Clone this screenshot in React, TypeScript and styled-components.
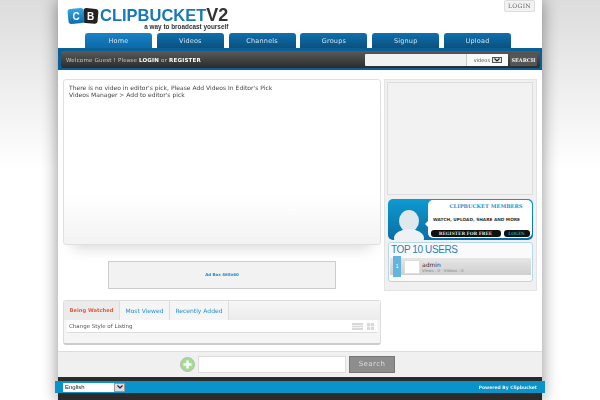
import styled, { createGlobalStyle } from "styled-components";

const GlobalStyle = createGlobalStyle`
  html, body {
    margin: 0;
    padding: 0;
    height: 400px;
    overflow: hidden;
    background: linear-gradient(180deg, #dcdcdc 0, #ffffff 170px);
  }
  * { box-sizing: border-box; }
`;

const Shell = styled.div`
  position: relative;
  width: 484px;
  height: 400px;
  margin: 0 auto;
  background: #fff;
  box-shadow: 0 0 16px rgba(0, 0, 0, 0.45);
  font-family: "DejaVu Sans", sans-serif;
  display: flex;
  flex-direction: column;
  opacity: 0.999;
`;

const Header = styled.div`
  height: 33px;
  padding: 7px 7px 0 9px;
  display: flex;
  justify-content: space-between;
  align-items: flex-start;
`;

const Logo = styled.div`
  display: flex;
`;

const LogoText = styled.div`
  display: flex;
  flex-direction: column;
  align-items: flex-end;
`;

const LogoTitle = styled.div`
  font-family: "Liberation Sans", sans-serif;
  font-weight: 700;
  font-size: 16.5px;
  line-height: 16px;
  color: #1878b8;
  white-space: nowrap;
`;

const LogoVersion = styled.span`
  color: #333;
  font-size: 18px;
`;

const LogoTag = styled.div`
  font-family: "Liberation Sans", sans-serif;
  font-weight: 700;
  font-size: 6.4px;
  line-height: 7px;
  color: #333;
`;

const LoginButton = styled.div`
  margin-top: -7px;
  width: 31px;
  height: 12px;
  border: 1px solid #ddd;
  border-radius: 2px;
  background: #f2f2f2;
  color: #666;
  font-family: "DejaVu Serif", serif;
  font-size: 6px;
  line-height: 10px;
  text-align: center;
  letter-spacing: 0.3px;
`;

const Tabs = styled.div`
  height: 15px;
  padding-left: 27px;
  display: flex;
  gap: 4.8px;
`;

const Tab = styled.div<{ $active?: boolean }>`
  width: 67px;
  border-radius: 3px 3px 0 0;
  background: linear-gradient(180deg, ${(p) => (p.$active ? "#1a82c4, #0c6aa8" : "#0f6fae, #0b517f")});
  color: #cfe3ef;
  font-size: 6.5px;
  line-height: 16px;
  text-align: center;
  letter-spacing: 0.2px;
`;

const NavBar = styled.div`
  height: 22px;
  background: #0b5f97;
  padding: 3px 2px 2px 3px;
`;

const NavInner = styled.div`
  height: 17px;
  border-radius: 2px;
  background: linear-gradient(180deg, #5a5a5a, #2b2b2b);
  display: flex;
  align-items: center;
  padding: 0 3px 0 5px;
  justify-content: space-between;
`;

const Welcome = styled.div`
  font-size: 5.5px;
  color: #c8c8c8;
  letter-spacing: 0.2px;
  white-space: nowrap;

  b {
    color: #fff;
  }
`;

const SearchGroup = styled.div`
  display: flex;
  align-items: center;
  gap: 2px;
`;

const SearchField = styled.div`
  width: 143px;
  height: 12px;
  background: #f2f2f2;
  border-radius: 1px;
  display: flex;
  justify-content: flex-end;
  align-items: center;
`;

const FieldType = styled.div`
  width: 42px;
  height: 12px;
  border-left: 1px solid #ccc;
  background: #fafafa;
  display: flex;
  align-items: center;
  justify-content: flex-end;
  gap: 2px;
  padding-right: 6px;
  font-size: 5px;
  color: #555;
`;

const SelectArrow = styled.div`
  width: 10px;
  height: 6px;
  border: 1px solid #555;
  background: #e6e6e6;
  display: flex;
  align-items: center;
  justify-content: center;
`;

const NavSearchButton = styled.div`
  width: 27px;
  height: 12px;
  background: #555;
  color: #eee;
  border-radius: 1px;
  font-family: "DejaVu Serif", serif;
  font-weight: 700;
  font-size: 5px;
  line-height: 12px;
  text-align: center;
`;

const Main = styled.div`
  height: 281px;
  padding: 9px 5px 0;
  display: flex;
  gap: 3px;
`;

const LeftColumn = styled.div`
  width: 318px;
  display: flex;
  flex-direction: column;
  align-items: center;
`;

const EditorPick = styled.div`
  width: 100%;
  height: 166px;
  padding: 4px 5px;
  border: 1px solid #e0e0e0;
  border-radius: 3px;
  background: linear-gradient(180deg, #fff 70%, #f3f3f3);
  box-shadow: 0 12px 14px -10px rgba(0, 0, 0, 0.18);
  color: #444;
  font-size: 6px;
  line-height: 7px;
  letter-spacing: 0.02px;
`;

const AdBox = styled.div`
  width: 228px;
  height: 28px;
  margin-top: 16px;
  border: 1px solid #ccc;
  background: #f2f2f2;
  color: #2a86c4;
  font-size: 4px;
  font-weight: 700;
  line-height: 26px;
  text-align: center;
`;

const ListPanel = styled.div`
  width: 100%;
  height: 45px;
  margin-top: 11px;
  border: 1px solid #ddd;
  border-bottom: 2px solid #ccc;
  border-radius: 3px;
  background: #f5f5f5;
`;

const ListTabs = styled.div`
  height: 19px;
  display: flex;
  background: linear-gradient(180deg, #f6f6f6, #ececec);
`;

const ListTab = styled.div<{ $active?: boolean }>`
  padding: 0 5.5px;
  border-right: 1px solid #ddd;
  background: ${(p) => (p.$active ? "#ebebeb" : "#f5f5f5")};
  color: ${(p) => (p.$active ? "#d9603b" : "#2a8fd0")};
  font-size: ${(p) => (p.$active ? "5.2px" : "6px")};
  font-weight: ${(p) => (p.$active ? 700 : 400)};
  line-height: 19px;
`;

const ListStyleRow = styled.div`
  margin: 0 3px;
  height: 13px;
  background: #fff;
  border-bottom: 1px solid #ddd;
  padding: 0 3px 0 2px;
  display: flex;
  align-items: center;
  justify-content: space-between;
  font-size: 5.5px;
  color: #555;
`;

const ListIcons = styled.div`
  display: flex;
  gap: 4px;
  align-items: center;
`;

const RightColumn = styled.div`
  width: 153px;
  height: 212px;
  background: #f0f0f0;
  border: 1px solid #e4e4e4;
  padding: 2px 3px 0 2px;
  display: flex;
  flex-direction: column;
`;

const AdSlot = styled.div`
  height: 113px;
  border: 1px solid #ddd;
  background: #f2f2f2;
`;

const Members = styled.div`
  margin-top: 4px;
  margin-left: 1px;
  height: 41px;
  border-radius: 5px;
  background: linear-gradient(180deg, #0d9ad0, #0a6ea6);
  padding: 1px 1px 2px 13px;
  display: flex;
  position: relative;
  overflow: hidden;
`;

const MembersCard = styled.div`
  position: relative;
  margin-left: 27px;
  flex: 1;
  border-radius: 5px;
  background: #fff;
  display: flex;
  flex-direction: column;
  align-items: center;
  padding-top: 3px;

  &::before {
    content: "";
    position: absolute;
    left: -3px;
    top: 21px;
    border-style: solid;
    border-width: 3px 3px 3px 0;
    border-color: transparent #fff transparent transparent;
  }
`;

const MembersTitle = styled.div`
  padding-left: 12px;
  color: #1a93cf;
  font-family: "DejaVu Serif", serif;
  font-weight: 700;
  font-size: 5.2px;
  line-height: 7px;
`;

const MembersText = styled.div`
  margin-top: 7px;
  width: 100%;
  padding-left: 5px;
  color: #333;
  font-weight: 700;
  font-size: 4.3px;
  line-height: 6px;
  white-space: nowrap;
`;

const MembersActions = styled.div`
  margin-top: 7px;
  display: flex;
  gap: 3px;
`;

const MembersButton = styled.div<{ $accent?: boolean }>`
  height: 7px;
  width: ${(p) => (p.$accent ? "26px" : "70px")};
  border-radius: 3px;
  background: #111;
  color: ${(p) => (p.$accent ? "#1a93cf" : "#ddd")};
  font-family: "DejaVu Serif", serif;
  font-weight: 700;
  font-size: 4.4px;
  line-height: 7px;
  text-align: center;
  white-space: nowrap;
`;

const Avatar = styled.svg`
  position: absolute;
  left: 4px;
  bottom: 0;
`;

const TopUsers = styled.div`
  margin-top: 2px;
  margin-left: 1px;
  height: 40px;
  border: 1px solid #b5d8ec;
  border-radius: 3px;
  background: #fafafa;
  padding: 1px;
`;

const TopTitle = styled.div`
  padding-left: 1px;
  color: #2a7fb8;
  font-family: "Liberation Sans", sans-serif;
  font-size: 10px;
  line-height: 12px;
  letter-spacing: -0.4px;
`;

const UserRow = styled.div`
  margin-top: 2px;
  height: 17px;
  background: linear-gradient(180deg, #e6e6e6, #cfcfcf);
  display: flex;
  align-items: center;
  padding-left: 3px;
`;

const Rank = styled.div`
  flex: none;
  width: 8px;
  height: 21px;
  background: #63b4de;
  color: #fff;
  font-size: 5px;
  line-height: 21px;
  text-align: center;
`;

const UserThumb = styled.div`
  width: 16px;
  height: 14px;
  margin-left: 3px;
  background: #fff;
  border: 1px solid #ddd;
`;

const UserInfo = styled.div`
  margin-left: 2px;
`;

const UserName = styled.div`
  font-size: 6px;
  line-height: 7px;
  color: #333;
`;

const UserStats = styled.div`
  font-size: 4px;
  line-height: 5px;
  color: #888;
`;

const BottomSearch = styled.div`
  height: 26px;
  background: #f0f0f0;
  border-top: 1px solid #ddd;
  padding-left: 122px;
  display: flex;
  align-items: center;
`;

const AddIcon = styled.svg`
  flex: none;
`;

const BottomInput = styled.div`
  width: 148px;
  height: 17px;
  margin-left: 3px;
  background: #fff;
  border: 1px solid #ddd;
`;

const BottomButton = styled.div`
  width: 46px;
  height: 17px;
  margin-left: 3px;
  background: #8d8d8d;
  border: 1px solid #777;
  color: #ddd;
  font-size: 7px;
  line-height: 15px;
  text-align: center;
  letter-spacing: 0.4px;
`;

const Footer = styled.div`
  flex: 1;
  background: #2b2b2b;
  padding-top: 4px;
`;

const FooterBar = styled.div`
  width: 490px;
  height: 12px;
  margin-left: -3px;
  background: #0a93c9;
  display: flex;
  align-items: center;
  justify-content: space-between;
  padding: 0 8px 0 8px;
`;

const LanguageSelect = styled.div`
  width: 62px;
  height: 9px;
  background: #fff;
  display: flex;
  justify-content: space-between;
  align-items: center;
  font-family: "Liberation Sans", sans-serif;
  font-size: 6px;
  color: #222;
  padding-left: 2px;
`;

const LanguageArrow = styled.div`
  width: 11px;
  height: 9px;
  background: #ddd;
  border: 1px solid #999;
  display: flex;
  align-items: center;
  justify-content: center;
`;

const PoweredBy = styled.div`
  color: #eee;
  font-weight: 700;
  font-size: 4.5px;
`;

const Chevron = () => (
  <svg width="6" height="4" viewBox="0 0 6 4">
    <path d="M0.5 0.5 L3 3 L5.5 0.5" fill="none" stroke="#222" strokeWidth="1.2" />
  </svg>
);

const LogoMark = () => (
  <svg width="33" height="18" viewBox="0 0 33 18">
    <defs>
      <linearGradient id="cbBlue" x1="0" y1="0" x2="0" y2="1">
        <stop offset="0" stopColor="#35a6e4" />
        <stop offset="1" stopColor="#0d6cad" />
      </linearGradient>
    </defs>
    <rect x="16" y="1.5" width="15" height="15" rx="3" fill="#222" transform="rotate(5 24 9)" />
    <rect x="1" y="1.5" width="16" height="15" rx="3" fill="url(#cbBlue)" transform="rotate(-6 9 9)" />
    <text x="5.5" y="12.5" fontFamily="Liberation Sans" fontWeight="700" fontSize="10" fill="#fff">C</text>
    <text x="20" y="13" fontFamily="Liberation Sans" fontWeight="700" fontSize="10" fill="#fff">B</text>
  </svg>
);

export default function App() {
  return (
    <>
      <GlobalStyle />
      <Shell>
        <Header>
          <Logo>
            <LogoMark />
            <LogoText>
              <LogoTitle>
                CLIPBUCKET<LogoVersion>V2</LogoVersion>
              </LogoTitle>
              <LogoTag>a way to broadcast yourself</LogoTag>
            </LogoText>
          </Logo>
          <LoginButton>LOGIN</LoginButton>
        </Header>
        <Tabs>
          <Tab $active>Home</Tab>
          <Tab>Videos</Tab>
          <Tab>Channels</Tab>
          <Tab>Groups</Tab>
          <Tab>Signup</Tab>
          <Tab>Upload</Tab>
        </Tabs>
        <NavBar>
          <NavInner>
            <Welcome>
              Welcome Guest ! Please <b>LOGIN</b> or <b>REGISTER</b>
            </Welcome>
            <SearchGroup>
              <SearchField>
                <FieldType>
                  videos
                  <SelectArrow>
                    <Chevron />
                  </SelectArrow>
                </FieldType>
              </SearchField>
              <NavSearchButton>SEARCH</NavSearchButton>
            </SearchGroup>
          </NavInner>
        </NavBar>
        <Main>
          <LeftColumn>
            <EditorPick>
              There is no video in editor's pick, Please Add Videos In Editor's Pick
              <br />
              Videos Manager &gt; Add to editor's pick
            </EditorPick>
            <AdBox>Ad Box 468x60</AdBox>
            <ListPanel>
              <ListTabs>
                <ListTab $active>Being Watched</ListTab>
                <ListTab>Most Viewed</ListTab>
                <ListTab>Recently Added</ListTab>
              </ListTabs>
              <ListStyleRow>
                Change Style of Listing
                <ListIcons>
                  <svg width="11" height="7" viewBox="0 0 11 7">
                    <rect width="11" height="7" fill="#d8d8d8" />
                    <path d="M0 2.5H11M0 4.5H11" stroke="#f4f4f4" />
                  </svg>
                  <svg width="7" height="7" viewBox="0 0 7 7">
                    <rect width="7" height="7" fill="#d8d8d8" />
                    <path d="M3.5 0V7M0 3.5H7" stroke="#f4f4f4" />
                  </svg>
                </ListIcons>
              </ListStyleRow>
            </ListPanel>
          </LeftColumn>
          <RightColumn>
            <AdSlot />
            <Members>
              <Avatar width="34" height="31" viewBox="0 0 34 31">
                <ellipse cx="17" cy="12" rx="10" ry="11" fill="#dfe8ec" />
                <ellipse cx="17" cy="29" rx="15" ry="9" fill="#eef2f4" />
              </Avatar>
              <MembersCard>
                <MembersTitle>CLIPBUCKET MEMBERS</MembersTitle>
                <MembersText>WATCH, UPLOAD, SHARE AND MORE</MembersText>
                <MembersActions>
                  <MembersButton>REGISTER FOR FREE</MembersButton>
                  <MembersButton $accent>LOGIN</MembersButton>
                </MembersActions>
              </MembersCard>
            </Members>
            <TopUsers>
              <TopTitle>TOP 10 USERS</TopTitle>
              <UserRow>
                <Rank>1</Rank>
                <UserThumb />
                <UserInfo>
                  <UserName>admin</UserName>
                  <UserStats>Views : 0 · Videos : 0</UserStats>
                </UserInfo>
              </UserRow>
            </TopUsers>
          </RightColumn>
        </Main>
        <BottomSearch>
          <AddIcon width="15" height="15" viewBox="0 0 15 15">
            <circle cx="7.5" cy="7.5" r="7" fill="#a2dc8f" stroke="#b9b9b9" />
            <path d="M7.5 3.5V11.5M3.5 7.5H11.5" stroke="#fff" strokeWidth="2.4" />
          </AddIcon>
          <BottomInput />
          <BottomButton>Search</BottomButton>
        </BottomSearch>
        <Footer>
          <FooterBar>
            <LanguageSelect>
              English
              <LanguageArrow>
                <Chevron />
              </LanguageArrow>
            </LanguageSelect>
            <PoweredBy>Powered By Clipbucket</PoweredBy>
          </FooterBar>
        </Footer>
      </Shell>
    </>
  );
}
